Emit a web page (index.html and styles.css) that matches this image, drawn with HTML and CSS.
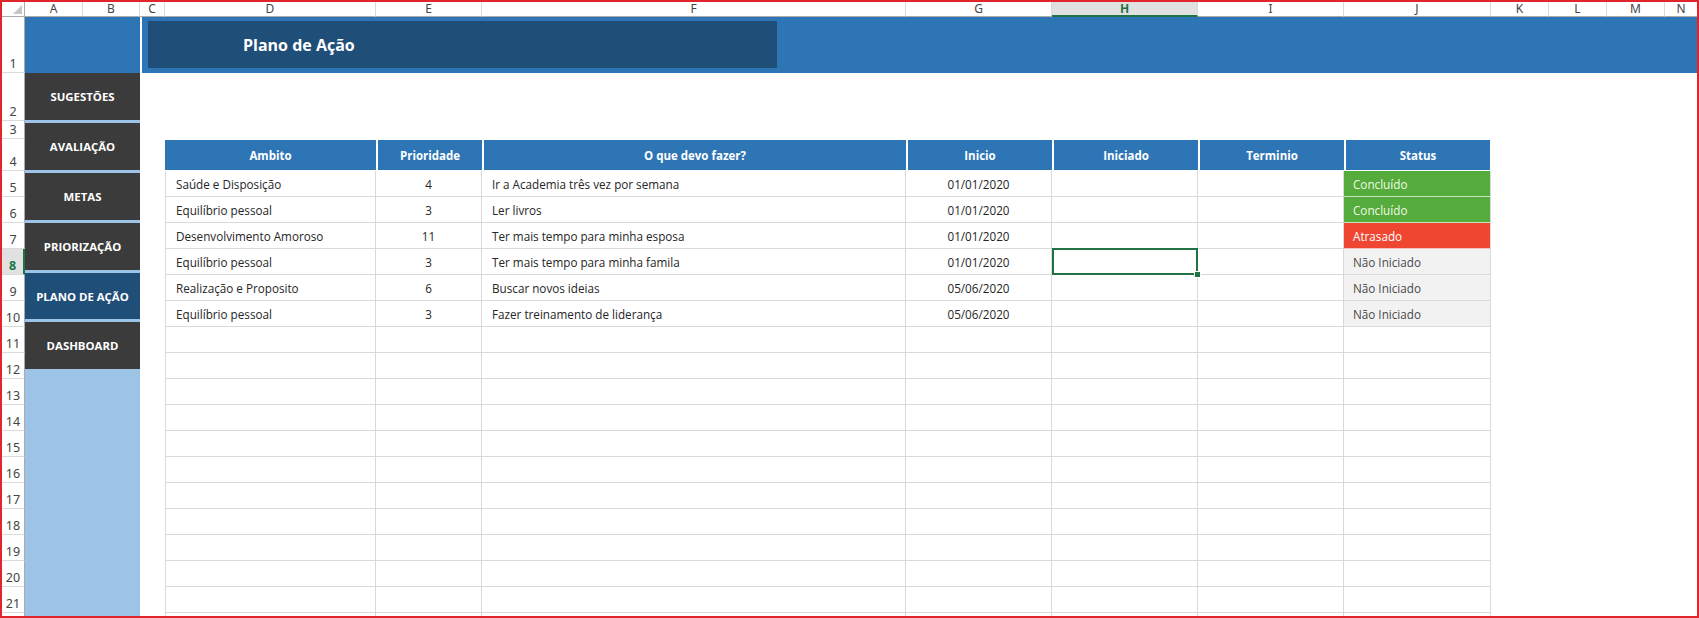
FILE: index.html
```html
<!DOCTYPE html>
<html lang="pt">
<head>
<meta charset="utf-8">
<title>Plano de Ação</title>
<link rel="stylesheet" href="styles.css">
</head>
<body>
<div class="sheet">
  <div class="corner"><svg width="9" height="9" viewBox="0 0 9 9"><polygon points="9,0 9,9 0,9" fill="#c6c6c6"/></svg></div>
  <div class="ch">A</div><div class="ch">B</div><div class="ch">C</div><div class="ch">D</div><div class="ch">E</div><div class="ch">F</div><div class="ch">G</div><div class="ch ch-sel">H</div><div class="ch">I</div><div class="ch">J</div><div class="ch">K</div><div class="ch">L</div><div class="ch">M</div><div class="ch ch-last">N</div>

  <div class="rh r1">1</div>
  <div class="rh r2">2</div>
  <div class="rh r3">3</div>
  <div class="rh r4">4</div>
  <div class="rh r5">5</div>
  <div class="rh r6">6</div>
  <div class="rh r7">7</div>
  <div class="rh r8 rh-sel">8</div>
  <div class="rh r9">9</div>
  <div class="rh r10">10</div>
  <div class="rh r11">11</div>
  <div class="rh r12">12</div>
  <div class="rh r13">13</div>
  <div class="rh r14">14</div>
  <div class="rh r15">15</div>
  <div class="rh r16">16</div>
  <div class="rh r17">17</div>
  <div class="rh r18">18</div>
  <div class="rh r19">19</div>
  <div class="rh r20">20</div>
  <div class="rh r21">21</div>
  <div class="rh r22"></div>

  <div class="logo-block"></div>
  <div class="band"><div class="title-box">Plano de Ação</div></div>

  <nav class="sidebar">
    <div class="nav-btn">SUGESTÕES</div>
    <div class="nav-btn">AVALIAÇÃO</div>
    <div class="nav-btn">METAS</div>
    <div class="nav-btn">PRIORIZAÇÃO</div>
    <div class="nav-btn nav-active">PLANO DE AÇÃO</div>
    <div class="nav-btn">DASHBOARD</div>
  </nav>

  <div class="table">
    <div class="thead">
      <div class="th">Ambito</div><div class="th">Prioridade</div><div class="th">O que devo fazer?</div><div class="th">Inicio</div><div class="th">Iniciado</div><div class="th">Terminio</div><div class="th">Status</div>
    </div>
    <div class="trow"><div class="td">Saúde e Disposição</div><div class="td c">4</div><div class="td">Ir a Academia três vez por semana</div><div class="td c">01/01/2020</div><div class="td"></div><div class="td"></div><div class="td st st-green">Concluído</div></div>
    <div class="trow"><div class="td">Equilíbrio pessoal</div><div class="td c">3</div><div class="td">Ler livros</div><div class="td c">01/01/2020</div><div class="td"></div><div class="td"></div><div class="td st st-green">Concluído</div></div>
    <div class="trow"><div class="td">Desenvolvimento Amoroso</div><div class="td c">11</div><div class="td">Ter mais tempo para minha esposa</div><div class="td c">01/01/2020</div><div class="td"></div><div class="td"></div><div class="td st st-red">Atrasado</div></div>
    <div class="trow"><div class="td">Equilíbrio pessoal</div><div class="td c">3</div><div class="td">Ter mais tempo para minha famila</div><div class="td c">01/01/2020</div><div class="td sel"></div><div class="td"></div><div class="td st st-gray">Não Iniciado</div></div>
    <div class="trow"><div class="td">Realização e Proposito</div><div class="td c">6</div><div class="td">Buscar novos ideias</div><div class="td c">05/06/2020</div><div class="td"></div><div class="td"></div><div class="td st st-gray">Não Iniciado</div></div>
    <div class="trow"><div class="td">Equilíbrio pessoal</div><div class="td c">3</div><div class="td">Fazer treinamento de liderança</div><div class="td c">05/06/2020</div><div class="td"></div><div class="td"></div><div class="td st st-gray">Não Iniciado</div></div>
    <div class="trow"><div class="td"></div><div class="td"></div><div class="td"></div><div class="td"></div><div class="td"></div><div class="td"></div><div class="td"></div></div>
    <div class="trow"><div class="td"></div><div class="td"></div><div class="td"></div><div class="td"></div><div class="td"></div><div class="td"></div><div class="td"></div></div>
    <div class="trow"><div class="td"></div><div class="td"></div><div class="td"></div><div class="td"></div><div class="td"></div><div class="td"></div><div class="td"></div></div>
    <div class="trow"><div class="td"></div><div class="td"></div><div class="td"></div><div class="td"></div><div class="td"></div><div class="td"></div><div class="td"></div></div>
    <div class="trow"><div class="td"></div><div class="td"></div><div class="td"></div><div class="td"></div><div class="td"></div><div class="td"></div><div class="td"></div></div>
    <div class="trow"><div class="td"></div><div class="td"></div><div class="td"></div><div class="td"></div><div class="td"></div><div class="td"></div><div class="td"></div></div>
    <div class="trow"><div class="td"></div><div class="td"></div><div class="td"></div><div class="td"></div><div class="td"></div><div class="td"></div><div class="td"></div></div>
    <div class="trow"><div class="td"></div><div class="td"></div><div class="td"></div><div class="td"></div><div class="td"></div><div class="td"></div><div class="td"></div></div>
    <div class="trow"><div class="td"></div><div class="td"></div><div class="td"></div><div class="td"></div><div class="td"></div><div class="td"></div><div class="td"></div></div>
    <div class="trow"><div class="td"></div><div class="td"></div><div class="td"></div><div class="td"></div><div class="td"></div><div class="td"></div><div class="td"></div></div>
    <div class="trow"><div class="td"></div><div class="td"></div><div class="td"></div><div class="td"></div><div class="td"></div><div class="td"></div><div class="td"></div></div>
    <div class="trow trow-cut"><div class="td"></div><div class="td"></div><div class="td"></div><div class="td"></div><div class="td"></div><div class="td"></div><div class="td"></div></div>
  </div>
</div>
</body>
</html>
```
FILE: styles.css
```css
html, body {
  margin: 0;
  padding: 0;
  background: #ffffff;
}

.sheet {
  width: 1699px;
  height: 618px;
  box-sizing: border-box;
  border: 2px solid #e0262b;
  display: grid;
  grid-template-columns: 23px 58px 57px 25px 211px 106px 424px 146px 146px 146px 147px 58px 58px 58px 32px;
  grid-template-rows: 15px 56px 48px 18px 32px repeat(17, 26px) 3px;
  overflow: hidden;
  font-family: "Open Sans", "Noto Sans", sans-serif;
  background: #ffffff;
}

/* column headers */
.corner {
  grid-column: 1;
  grid-row: 1;
  box-sizing: border-box;
  border-right: 1px solid #ababab;
  border-bottom: 1px solid #ababab;
  display: flex;
  align-items: flex-end;
  justify-content: flex-end;
  padding: 0 2px 2px 0;
}

.ch {
  grid-row: 1;
  box-sizing: border-box;
  border-right: 1px solid #dadada;
  border-bottom: 1px solid #ababab;
  font-size: 12px;
  line-height: 14px;
  color: #444444;
  text-align: center;
  font-family: "Noto Sans", sans-serif;
}

.ch-last {
  border-right: none;
}

.ch-sel {
  background: #e1e1e1;
  color: #217346;
  font-weight: bold;
  border-bottom: 2px solid #217346;
}

/* row headers */
.rh {
  grid-column: 1;
  box-sizing: border-box;
  border-right: 1px solid #ababab;
  border-bottom: 1px solid #dadada;
  font-size: 12.5px;
  line-height: 14px;
  color: #444444;
  display: flex;
  align-items: flex-end;
  justify-content: center;
  padding-bottom: 1px;
  font-family: "Noto Sans", sans-serif;
}

.r1 { grid-row: 2; }
.r2 { grid-row: 3; }
.r3 { grid-row: 4; }
.r4 { grid-row: 5; }
.r5 { grid-row: 6; }
.r6 { grid-row: 7; }
.r7 { grid-row: 8; }
.r8 { grid-row: 9; }
.r9 { grid-row: 10; }
.r10 { grid-row: 11; }
.r11 { grid-row: 12; }
.r12 { grid-row: 13; }
.r13 { grid-row: 14; }
.r14 { grid-row: 15; }
.r15 { grid-row: 16; }
.r16 { grid-row: 17; }
.r17 { grid-row: 18; }
.r18 { grid-row: 19; }
.r19 { grid-row: 20; }
.r20 { grid-row: 21; }
.r21 { grid-row: 22; }
.r22 { grid-row: 23; border-bottom: none; }

.rh-sel {
  background: #e1e1e1;
  color: #217346;
  font-weight: bold;
  border-right: 2px solid #217346;
}

/* top band */
.logo-block {
  grid-column: 2 / 4;
  grid-row: 2;
  background: #2e75b6;
}

.band {
  grid-column: 4 / 16;
  grid-row: 2;
  margin-left: 2px;
  background: #2e75b6;
  padding: 4px 0 5px 6px;
  display: flex;
}

.title-box {
  width: 629px;
  background: #1f4e79;
  color: #ffffff;
  font-weight: bold;
  font-size: 16px;
  display: flex;
  align-items: center;
  padding-left: 95px;
  box-sizing: border-box;
}

/* sidebar */
.sidebar {
  grid-column: 2 / 4;
  grid-row: 3 / 24;
  background: #9dc3e6;
  display: flex;
  flex-direction: column;
  gap: 3px;
}

.nav-btn {
  height: 47px;
  flex: none;
  background: #3b3b3b;
  color: #ffffff;
  font-weight: bold;
  font-size: 11.4px;
  display: flex;
  align-items: center;
  justify-content: center;
}

.nav-active {
  background: #1f4e79;
  height: 46px;
}

/* table */
.table {
  grid-column: 5 / 12;
  grid-row: 5 / 24;
  display: flex;
  flex-direction: column;
}

.thead,
.trow {
  display: grid;
  grid-template-columns: 211px 106px 424px 146px 146px 146px 147px;
}

.thead {
  height: 32px;
  padding: 1px 0;
  box-sizing: border-box;
}

.th {
  background: #2e75b6;
  color: #ffffff;
  font-weight: bold;
  font-size: 11.5px;
  display: flex;
  align-items: center;
  justify-content: center;
  border-left: 2px solid #ffffff;
}

.th:first-child {
  border-left: none;
}

.th:last-child {
  margin-right: 1px;
}

.trow {
  height: 26px;
}

.trow-cut {
  height: 3px;
}

.td {
  box-sizing: border-box;
  border-right: 1px solid #d9d9d9;
  border-bottom: 1px solid #d9d9d9;
  font-size: 11.7px;
  color: #262626;
  display: flex;
  align-items: center;
  padding-left: 10px;
  white-space: nowrap;
}

.td:first-child {
  border-left: 1px solid #d9d9d9;
}

.trow-cut .td {
  border-bottom: none;
}

.td.c {
  justify-content: center;
  padding-left: 0;
}

.st {
  padding-left: 9px;
}

.st-green {
  background: #55ab3b;
  color: #eefbe6;
  border-bottom-color: #c9e3bf;
}

.st-red {
  background: #ee4631;
  color: #ffffff;
  border-bottom-color: #f3c3bb;
}

.st-gray {
  background: #f2f2f2;
  color: #4a4a4a;
}

.sel {
  position: relative;
}

.sel::after {
  content: "";
  position: absolute;
  left: 0;
  top: -1px;
  right: -1px;
  bottom: -1px;
  border: 2px solid #217346;
}

.sel::before {
  content: "";
  position: absolute;
  right: -4px;
  bottom: -4px;
  width: 5px;
  height: 5px;
  background: #217346;
  border: 1px solid #ffffff;
  z-index: 2;
}
```
